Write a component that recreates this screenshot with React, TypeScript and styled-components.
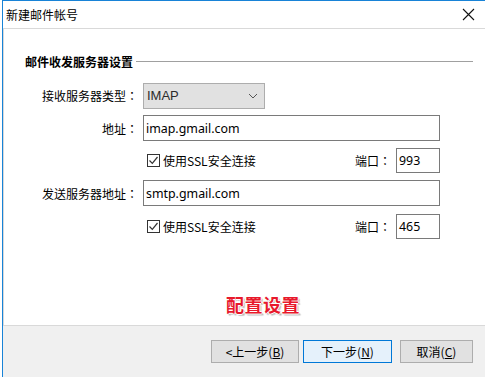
import React from "react";
import styled, { createGlobalStyle } from "styled-components";

const Global = createGlobalStyle`
  html, body { margin: 0; padding: 0; background: #ffffff; }
  body { font-family: "Noto Sans CJK SC", "Noto Sans", sans-serif; font-size: 12px; color: #000; }
  * { box-sizing: border-box; }
`;

const Window = styled.div`
  width: 485px;
  height: 377px;
  margin-left: 2px;
  border-left: 1px solid #1883d7;
  border-top: 1px solid #1883d7;
  display: flex;
  flex-direction: column;
  background: #fff;
`;

const TitleBar = styled.div`
  height: 27px;
  display: flex;
  align-items: center;
  justify-content: space-between;
  padding: 0 12px 0 3px;
  font-size: 12px;
  color: #000;
`;

const Panel = styled.div`
  height: 298px;
  border: 1px solid #d9d9d9;
  background: #fff;
  padding: 24px 0 0 21px;
  display: flex;
  flex-direction: column;
`;

const SectionHead = styled.div`
  display: flex;
  align-items: center;
  gap: 3px;
  font-weight: bold;
  font-size: 12px;
  height: 16px;
  margin-right: 13px;
  &::after {
    content: "";
    flex: 1;
    height: 1px;
    background: #a0a0a0;
  }
`;

const Form = styled.div`
  display: flex;
  flex-direction: column;
  margin-top: 10px;
`;

const Row = styled.div<{ $h: number }>`
  display: flex;
  align-items: center;
  height: ${(p) => p.$h}px;
`;

const Label = styled.div`
  width: 113px;
  text-align: right;
  white-space: nowrap;
`;

const Colon = styled.span`
  font-family: "Noto Sans CJK JP", "Noto Sans CJK SC", sans-serif;
`;

const Field = styled.div`
  margin-left: 5px;
  width: 297px;
  display: flex;
  align-items: center;
`;

const Select = styled.div`
  width: 122px;
  height: 26px;
  background: #e1e1e1;
  border: 1px solid #adadad;
  display: flex;
  align-items: center;
  justify-content: space-between;
  padding: 0 6px 0 3px;
  font-family: "Liberation Sans", Arial, sans-serif;
  font-size: 13px;
  color: #2b2b2b;
`;

const Input = styled.div<{ $w?: number }>`
  width: ${(p) => (p.$w ? `${p.$w}px` : "100%")};
  height: ${(p) => (p.$w ? 25 : 26)}px;
  border: 1px solid #7a7a7a;
  background: #fff;
  display: flex;
  align-items: center;
  padding-left: 2px;
  font-size: 12.4px;
  font-family: "Noto Sans", "Liberation Sans", sans-serif;
  color: #000;
`;

const CheckLine = styled.div`
  display: flex;
  align-items: center;
  flex: 1;
  padding-left: 4px;
`;

const Box = styled.span`
  width: 13px;
  height: 13px;
  border: 1px solid #333;
  display: inline-flex;
  align-items: center;
  justify-content: center;
  margin-right: 3px;
`;

const Port = styled.div`
  display: flex;
  align-items: center;
  gap: 5px;
`;

const Note = styled.div`
  margin-top: auto;
  margin-bottom: 8px;
  align-self: flex-start;
  margin-left: 201px;
  font-weight: bold;
  font-size: 18px;
  color: #e8192c;
  letter-spacing: 0.5px;
  text-shadow: 1px 0 0 #fff, -1px 0 0 #fff, 0 1px 0 #fff, 0 -1px 0 #fff,
    1px 1px 1px #999, 2px 2px 1px #ccc;
`;

const Footer = styled.div`
  flex: 1;
  background: #f0f0f0;
  display: flex;
  align-items: flex-start;
  padding: 14px 0 0 208px;
`;

const Btn = styled.div<{ $w: number; $primary?: boolean; $ml?: number }>`
  width: ${(p) => p.$w}px;
  height: 23px;
  margin-left: ${(p) => p.$ml ?? 0}px;
  border: 1px solid ${(p) => (p.$primary ? "#0078d7" : "#adadad")};
  background: ${(p) => (p.$primary ? "#e5f1fb" : "#e1e1e1")};
  display: flex;
  align-items: center;
  justify-content: center;
  font-size: 12px;
  color: #000;
  u { text-decoration: underline; text-underline-offset: 1px; }
`;

const Check = () => (
  <svg width="11" height="11" viewBox="0 0 11 11">
    <path d="M1.5 5.5 L4.3 8.3 L9.5 2" stroke="#333" strokeWidth="1.2" fill="none" />
  </svg>
);

const Chevron = () => (
  <svg width="10" height="6" viewBox="0 0 10 6">
    <path d="M1 1 L5 5 L9 1" stroke="#555" strokeWidth="1" fill="none" />
  </svg>
);

const Close = () => (
  <svg width="13" height="13" viewBox="0 0 13 13">
    <path d="M1 1 L12 12 M12 1 L1 12" stroke="#111" strokeWidth="1.1" />
  </svg>
);

export default function App() {
  return (
    <>
      <Global />
      <Window>
        <TitleBar>
          <span>新建邮件帐号</span>
          <Close />
        </TitleBar>
        <Panel>
          <SectionHead>邮件收发服务器设置</SectionHead>
          <Form>
            <Row $h={33}>
              <Label>
                接收服务器类型<Colon>：</Colon>
              </Label>
              <Field>
                <Select>
                  <span>IMAP</span>
                  <Chevron />
                </Select>
              </Field>
            </Row>
            <Row $h={32}>
              <Label>
                地址<Colon>：</Colon>
              </Label>
              <Field>
                <Input>imap.gmail.com</Input>
              </Field>
            </Row>
            <Row $h={32}>
              <Label />
              <Field>
                <CheckLine>
                  <Box>
                    <Check />
                  </Box>
                  使用SSL安全连接
                </CheckLine>
                <Port>
                  <span>
                    端口<Colon>：</Colon>
                  </span>
                  <Input $w={44}>993</Input>
                </Port>
              </Field>
            </Row>
            <Row $h={34}>
              <Label>
                发送服务器地址<Colon>：</Colon>
              </Label>
              <Field>
                <Input>smtp.gmail.com</Input>
              </Field>
            </Row>
            <Row $h={32}>
              <Label />
              <Field>
                <CheckLine>
                  <Box>
                    <Check />
                  </Box>
                  使用SSL安全连接
                </CheckLine>
                <Port>
                  <span>
                    端口<Colon>：</Colon>
                  </span>
                  <Input $w={44}>465</Input>
                </Port>
              </Field>
            </Row>
          </Form>
          <Note>配置设置</Note>
        </Panel>
        <Footer>
          <Btn $w={88}>
            &lt;上一步(<u>B</u>)
          </Btn>
          <Btn $w={89} $primary $ml={4}>
            下一步(<u>N</u>)
          </Btn>
          <Btn $w={73} $ml={8}>
            取消(<u>C</u>)
          </Btn>
        </Footer>
      </Window>
    </>
  );
}
